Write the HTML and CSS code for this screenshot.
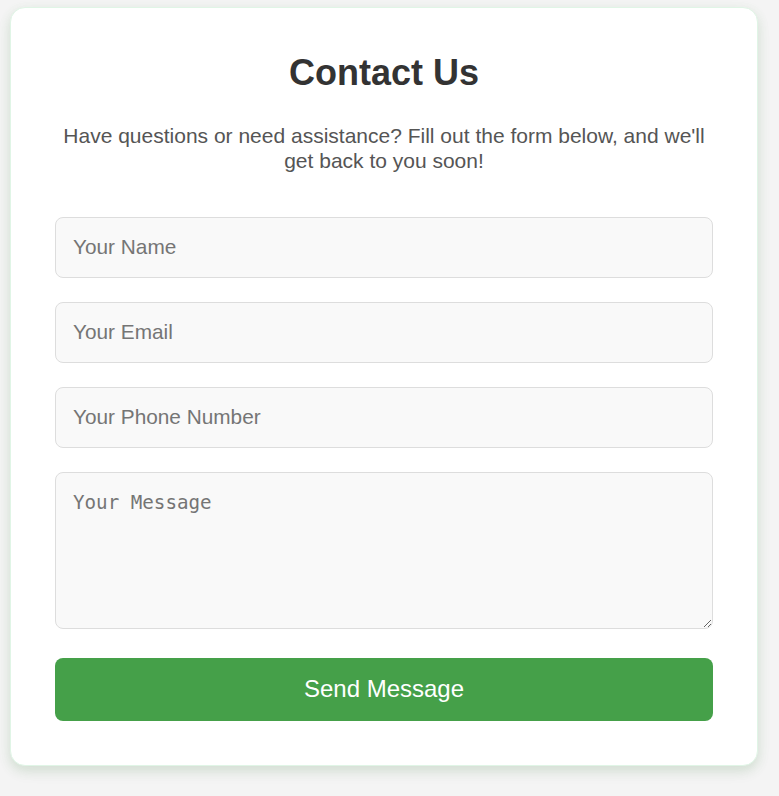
FILE: index.html
```html
<!DOCTYPE html>
<html lang="en">
<head>
<meta charset="utf-8">
<title>Contact Us</title>
<link rel="stylesheet" href="styles.css">
</head>
<body>
<div class="card">
  <h1 class="title">Contact Us</h1>
  <p class="subtitle">Have questions or need assistance? Fill out the form below, and we'll get back to you soon!</p>
  <form class="form">
    <input class="field" type="text" placeholder="Your Name">
    <input class="field" type="email" placeholder="Your Email">
    <input class="field" type="tel" placeholder="Your Phone Number">
    <textarea class="message" placeholder="Your Message"></textarea>
    <button class="send" type="button">Send Message</button>
  </form>
</div>
</body>
</html>
```

FILE: styles.css
```css
html, body {
  margin: 0;
  background: #f4f4f4;
}
body {
  padding: 7px 21px 30px 10px;
  font-family: "Liberation Sans", Arial, sans-serif;
}
.card {
  background: #fff;
  border: 1px solid #e0f5e6;
  border-radius: 15px;
  padding: 44px;
  box-shadow: 0 6px 16px rgba(0, 0, 0, 0.06), 0 4px 12px rgba(76, 175, 80, 0.14);
}
.title {
  margin: 0;
  text-align: center;
  font-size: 36px;
  font-weight: bold;
  color: #333;
  line-height: 41px;
}
.subtitle {
  margin: 30px 0 43.5px;
  text-align: center;
  font-size: 21px;
  line-height: 25px;
  color: #555;
}
.form {
  display: flex;
  flex-direction: column;
  gap: 24px;
}
.field, .message {
  box-sizing: border-box;
  width: 100%;
  margin: 0;
  background: #f9f9f9;
  border: 1px solid #ddd;
  border-radius: 8px;
  color: #333;
  outline: none;
}
.field {
  height: 61px;
  padding: 0 17px;
  font-family: "Liberation Sans", Arial, sans-serif;
  font-size: 20.8px;
}
.message {
  height: 157px;
  padding: 18px 17px;
  font-family: "DejaVu Sans Mono", monospace;
  font-size: 19.2px;
  resize: vertical;
  display: block;
  margin-bottom: 5px;
}
.field::placeholder, .message::placeholder {
  color: #757575;
}
.send {
  height: 63.5px;
  border: none;
  border-radius: 8px;
  background: #45a049;
  color: #fff;
  font-family: "Liberation Sans", Arial, sans-serif;
  font-size: 24px;
  cursor: pointer;
}
```
